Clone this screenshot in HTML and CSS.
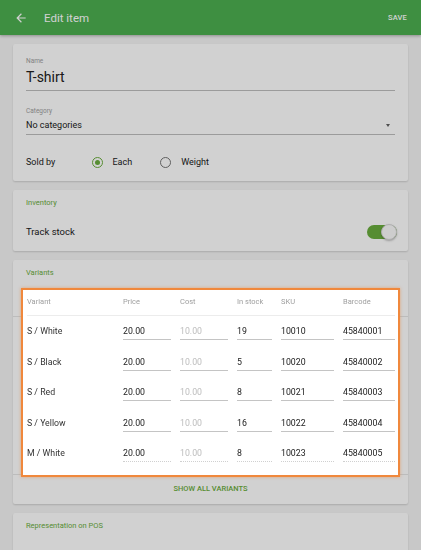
FILE: index.html
```html
<!DOCTYPE html>
<html lang="en">
  <head>
    <meta charset="utf-8">
    <meta name="viewport" content="width=device-width, initial-scale=1.0">
    <title>Edit item</title>
    <link rel="stylesheet" href="styles.css">
  </head>
  <body>
    <header class="toolbar">
      <svg class="toolbar__back" viewBox="0 0 24 24"><path d="M20 11H7.83l5.59-5.59L12 4l-8 8 8 8 1.41-1.41L7.83 13H20v-2z"/></svg>
      <h1 class="toolbar__title">Edit item</h1>
      <span class="toolbar__save">SAVE</span>
    </header>

    <main class="page">
      <section class="card card--main">
        <div class="field">
          <label class="field__label">Name</label>
          <div class="field__input field__input--big">T-shirt</div>
        </div>
        <div class="field field--category">
          <label class="field__label">Category</label>
          <div class="field__input field__input--select">
            <span>No categories</span>
            <span class="caret"></span>
          </div>
        </div>
        <div class="sold-by">
          <span class="sold-by__label">Sold by</span>
          <span class="radio radio--on"></span>
          <span class="sold-by__option">Each</span>
          <span class="radio"></span>
          <span class="sold-by__option">Weight</span>
        </div>
      </section>

      <section class="card card--inventory">
        <h2 class="card__title">Inventory</h2>
        <div class="switch-row">
          <span>Track stock</span>
          <span class="switch"><span class="switch__thumb"></span></span>
        </div>
      </section>

      <section class="card card--variants">
        <h2 class="card__title">Variants</h2>
        <div class="variants">
          <div class="variants__head">
            <span>Variant</span>
            <span>Price</span>
            <span>Cost</span>
            <span>In stock</span>
            <span>SKU</span>
            <span>Barcode</span>
          </div>
          <div class="variants__row">
            <span class="cell">S / White</span>
            <span class="cell cell--input">20.00</span>
            <span class="cell cell--input cell--hint">10.00</span>
            <span class="cell cell--input">19</span>
            <span class="cell cell--input">10010</span>
            <span class="cell cell--input">45840001</span>
          </div>
          <div class="variants__row">
            <span class="cell">S / Black</span>
            <span class="cell cell--input">20.00</span>
            <span class="cell cell--input cell--hint">10.00</span>
            <span class="cell cell--input">5</span>
            <span class="cell cell--input">10020</span>
            <span class="cell cell--input">45840002</span>
          </div>
          <div class="variants__row">
            <span class="cell">S / Red</span>
            <span class="cell cell--input">20.00</span>
            <span class="cell cell--input cell--hint">10.00</span>
            <span class="cell cell--input">8</span>
            <span class="cell cell--input">10021</span>
            <span class="cell cell--input">45840003</span>
          </div>
          <div class="variants__row">
            <span class="cell">S / Yellow</span>
            <span class="cell cell--input">20.00</span>
            <span class="cell cell--input cell--hint">10.00</span>
            <span class="cell cell--input">16</span>
            <span class="cell cell--input">10022</span>
            <span class="cell cell--input">45840004</span>
          </div>
          <div class="variants__row variants__row--last">
            <span class="cell">M / White</span>
            <span class="cell cell--input">20.00</span>
            <span class="cell cell--input cell--hint">10.00</span>
            <span class="cell cell--input">8</span>
            <span class="cell cell--input">10023</span>
            <span class="cell cell--input">45840005</span>
          </div>
        </div>
        <div class="show-all">SHOW ALL VARIANTS</div>
      </section>

      <section class="card card--pos">
        <h2 class="card__title">Representation on POS</h2>
      </section>
    </main>
  </body>
</html>
```

FILE: styles.css
```css
*, *::after, *::before {
  margin: 0;
  padding: 0;
  box-sizing: border-box;
}
html, body {
  height: 550px;
  overflow: hidden;
}
body {
  background-color: #f5f5f5;
  font-family: Roboto, "Noto Sans", sans-serif;
  color: #212121;
}
/* dim layer, the variants table sits above it */
body::after {
  content: '';
  position: fixed;
  top: 0;
  left: 0;
  right: 0;
  bottom: 0;
  background-color: rgba(0, 0, 0, 0.18);
  z-index: 5;
  pointer-events: none;
}

.toolbar {
  display: flex;
  align-items: center;
  height: 35px;
  padding: 0 14px;
  background-color: #4caf50;
  color: #fff;
  box-shadow: 0 1px 3px rgba(0, 0, 0, 0.3);
}
.toolbar__back {
  width: 14px;
  height: 14px;
  fill: #fff;
}
.toolbar__title {
  flex: 1;
  margin-left: 16px;
  font-size: 11.5px;
  font-weight: 400;
}
.toolbar__save {
  font-size: 7.5px;
  font-weight: 500;
  letter-spacing: 0.2px;
}

.page {
  display: flex;
  flex-direction: column;
  gap: 9px;
  padding: 9px 13px;
}
.card {
  padding: 0 13px;
  background-color: #fff;
  border-radius: 2px;
  box-shadow: 0 1px 2px rgba(0, 0, 0, 0.16);
}
.card__title {
  font-size: 7.5px;
  line-height: 10px;
  font-weight: 400;
  color: #6aad3d;
}

/* main card */
.card--main {
  padding-top: 13px;
  padding-bottom: 9px;
}
.field__label {
  display: block;
  font-size: 6.5px;
  line-height: 9px;
  color: #9e9e9e;
}
.field__input {
  border-bottom: 1px solid #bdbdbd;
}
.field__input--big {
  margin-top: 2px;
  padding-bottom: 4px;
  font-size: 14px;
  line-height: 18px;
}
.field--category {
  margin-top: 16px;
}
.field__input--select {
  display: flex;
  justify-content: space-between;
  align-items: center;
  margin-top: 3px;
  padding-bottom: 3px;
  font-size: 9px;
  line-height: 12px;
}
.caret {
  margin-right: 5px;
  border-left: 2.5px solid transparent;
  border-right: 2.5px solid transparent;
  border-top: 3px solid #616161;
}
.sold-by {
  display: flex;
  align-items: center;
  height: 20px;
  margin-top: 17px;
  font-size: 9px;
}
.sold-by__label {
  width: 65.5px;
}
.sold-by__option {
  margin-left: 10px;
}
.sold-by__option + .radio {
  margin-left: 28px;
}
.radio {
  display: flex;
  align-items: center;
  justify-content: center;
  width: 11px;
  height: 11px;
  border: 1.5px solid #757575;
  border-radius: 50%;
}
.radio--on {
  border-color: #6aad3d;
}
.radio--on::before {
  content: '';
  width: 5px;
  height: 5px;
  border-radius: 50%;
  background-color: #6aad3d;
}

/* inventory */
.card--inventory {
  padding-top: 8px;
  padding-bottom: 9px;
}
.switch-row {
  display: flex;
  justify-content: space-between;
  align-items: center;
  height: 20px;
  margin-top: 13.5px;
  font-size: 9.5px;
}
.switch {
  display: flex;
  justify-content: flex-end;
  align-items: center;
  width: 30px;
  height: 14px;
  margin-right: -2px;
  border-radius: 7px;
  background-color: #6aad3d;
}
.switch__thumb {
  width: 16px;
  height: 16px;
  border-radius: 50%;
  background-color: #fafafa;
  border: 1px solid #d6d6d6;
  box-shadow: 0 1px 2px rgba(0, 0, 0, 0.25);
}

/* variants */
.card--variants {
  position: relative;
  padding-top: 8px;
  padding-bottom: 9px;
}
.card--variants::before, .card--variants::after {
  content: '';
  position: absolute;
  left: 0;
  right: 0;
  height: 1px;
  background-color: #e6e6e6;
}
.card--variants::before {
  top: 56px;
}
.card--variants::after {
  top: 214px;
}
.variants {
  position: relative;
  z-index: 10;
  margin: 10px -5px 0;
  padding: 0 3px 7px 4px;
  background-color: #fff;
  border: 2px solid #f0883c;
  box-shadow: 0 0 3px rgba(240, 136, 60, 0.6);
}
.variants__head, .variants__row {
  display: grid;
  grid-template-columns: 87px 48px 48px 35px 53px 1fr;
  column-gap: 9px;
}
.variants__head {
  align-items: center;
  height: 26px;
  padding-bottom: 2px;
  border-bottom: 1px solid #ececec;
  font-size: 7.5px;
  color: #9e9e9e;
}
.variants__row {
  align-items: end;
  height: 30.5px;
  padding-bottom: 6px;
  font-size: 8.75px;
}
.cell {
  line-height: 12px;
  padding-bottom: 2px;
  border-bottom: 1px solid transparent;
  color: #333;
}
.cell--input {
  border-bottom-color: #c4c4c4;
  color: #212121;
}
.cell--hint {
  color: #bdbdbd;
}
.variants__row--last .cell--input {
  border-bottom-style: dotted;
  border-bottom-color: #d0d0d0;
}
.show-all {
  margin-top: 5.5px;
  font-size: 7.5px;
  line-height: 12px;
  font-weight: 500;
  text-align: center;
  color: #6aad3d;
}

.card--pos {
  height: 60px;
  padding-top: 8px;
}
```
